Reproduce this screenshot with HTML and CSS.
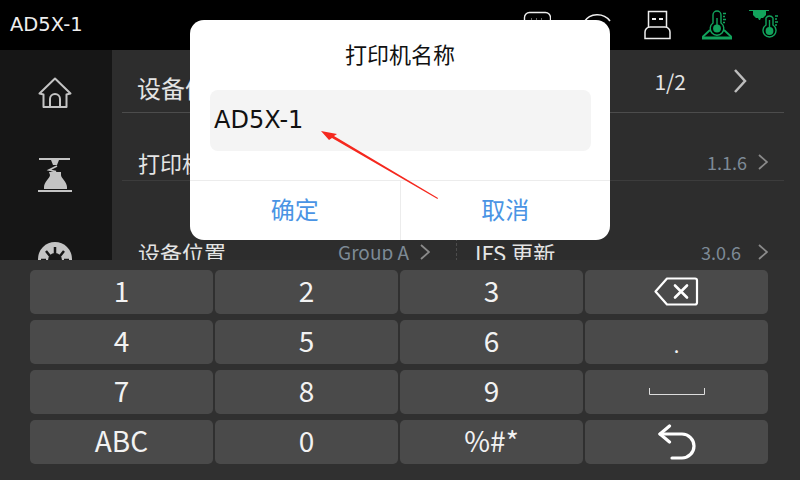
FILE: index.html
```html
<!DOCTYPE html>
<html lang="en">
<head>
    <meta charset="UTF-8" />
    <title>AD5X-1</title>
    <link rel="stylesheet" href="styles.css">
</head>
<body>
    <div class="screen">
        <div class="topbar">
            <span class="device-name">AD5X-1</span>
            <div class="status-icons">
                <svg width="30" height="30" viewBox="0 0 30 30" fill="none" stroke="#eee" stroke-width="1.400"><rect x="3.500" y="2.500" width="26" height="24" rx="5"/><path d="M10 9h1M15 9h1M20 9h1" stroke="#888"/></svg>
                <svg width="30" height="30" viewBox="0 0 30 30" fill="none" stroke="#eee" stroke-width="1.600"><path d="M3 12a16 16 0 0 1 26 -1"/></svg>
                <svg width="30" height="30" viewBox="0 0 30 30" fill="none" stroke="#eee" stroke-width="1.500"><path d="M7.500 17V1.500h18V17"/><path d="M4 28.500V22a5 5 0 0 1 5-5h15a5 5 0 0 1 5 5v6.500z"/><path d="M11 9h4M18 9h4" stroke-width="2.200"/></svg>
                <svg width="32" height="30" viewBox="0 0 32 30" fill="none" stroke="#12a35c" stroke-width="1.400"><path d="M12 13V5a4 4 0 0 1 8 0v8a6.800 6.800 0 1 1-8 0z"/><circle cx="16" cy="18.500" r="3.200" fill="#12a35c"/><path d="M16 8v9M22 3.500h3M22 6.500h2M22 9.500h3M22 12.500h2"/><path d="M9 20l-7.500 7M23 20l7.500 7" stroke-width="1.800"/><path d="M1 28h30" stroke-width="3"/></svg>
                <svg width="32" height="30" viewBox="0 0 32 30" fill="none" stroke="#12a35c" stroke-width="1.400"><path d="M1 0h20v1H1z" stroke="none" fill="#12a35c"/><path d="M5 1h13v4l-3 3h-2l-1 2h-1l-1-2H8L5 5z" fill="#12a35c" stroke="none"/><path d="M18 15V8a4 4 0 0 1 7 0v7a6.500 6.500 0 1 1-7 0z"/><circle cx="21.500" cy="21" r="3.200" fill="#12a35c"/><path d="M21.500 10v10M27 6h3M27 9h2M27 12h3M27 15h2"/></svg>
            </div>
        </div>

        <div class="main">
            <div class="sidebar">
                <svg width="34" height="31" viewBox="0 0 34 31" fill="none" stroke="#c4c4c4" stroke-width="2"><path d="M17 1.500L1.500 16.500l4 1v12.500h23V17.500l4-1z" stroke-linejoin="round"/><path d="M12 30V22a5 5 0 0 1 10 0v8"/></svg>
                <svg width="34" height="34" viewBox="0 0 34 34" fill="#c4c4c4"><path d="M1 0h31v2H1zM13 2h8l-2 5h-4z"/><path d="M19 8l-8 4 7 1.500-6 1.500" fill="none" stroke="#c4c4c4" stroke-width="1.600"/><path d="M11 14h12v3c0 3 6 7 6 12v2H6v-2c0-5 6-9 6-12z"/><path d="M0 32h34v2H0z"/></svg>
                <svg width="34" height="34" viewBox="0 0 34 34"><circle cx="17" cy="17" r="17" fill="#c4c4c4"/><circle cx="17" cy="18" r="7" fill="#161616"/><path d="M17 5v7M8 9l4 5M26 9l-4 5M3 18h5M31 18h-5" stroke="#161616" stroke-width="2.500"/></svg>
            </div>
            <div class="content">
                <div class="content-head">
                    <span class="head-title">设备信息</span>
                    <span class="pager">1/2</span>
                    <svg class="pager-arrow" width="14" height="26" viewBox="0 0 14 26" fill="none" stroke="#bdbdbd" stroke-width="2.500"><path d="M2 2l10 11L2 24"/></svg>
                </div>
                <div class="row row-first">
                    <span class="row-label">打印机名称</span>
                    <span class="value">1.1.6</span>
                    <svg width="10" height="16" viewBox="0 0 10 16" fill="none" stroke="#8a8a8a" stroke-width="1.800"><path d="M1 1l8 7-8 7"/></svg>
                </div>
                <div class="row row-second">
                    <div class="cell cell-split">
                        <span class="row-label">设备位置</span>
                        <span class="value value-group">Group A</span>
                        <svg width="10" height="16" viewBox="0 0 10 16" fill="none" stroke="#8a8a8a" stroke-width="1.800"><path d="M1 1l8 7-8 7"/></svg>
                    </div>
                    <div class="cell cell-right">
                        <span class="row-label">IFS 更新</span>
                        <span class="value value-far">3.0.6</span>
                        <svg width="10" height="16" viewBox="0 0 10 16" fill="none" stroke="#8a8a8a" stroke-width="1.800"><path d="M1 1l8 7-8 7"/></svg>
                    </div>
                </div>
            </div>
        </div>

        <div class="keyboard">
            <div class="key key-text">1</div>
            <div class="key key-text">2</div>
            <div class="key key-text">3</div>
            <div class="key"><svg width="46" height="30" viewBox="0 0 46 30" fill="none" stroke="#fff" stroke-width="2.200" stroke-linejoin="round"><path d="M13 1.500h28a2 2 0 0 1 2 2v22a2 2 0 0 1-2 2H13L1.500 14.500z"/><path d="M21 8.500l12 12M33 8.500l-12 12" stroke-linecap="round" stroke-width="2.600"/></svg></div>
            <div class="key key-text">4</div>
            <div class="key key-text">5</div>
            <div class="key key-text">6</div>
            <div class="key key-dot">.</div>
            <div class="key key-text">7</div>
            <div class="key key-text">8</div>
            <div class="key key-text">9</div>
            <div class="key"><svg width="58" height="8" viewBox="0 0 58 8" fill="none" stroke="#ddd"><path d="M1.500 0v6.500h55V0"/></svg></div>
            <div class="key key-text">ABC</div>
            <div class="key key-text">0</div>
            <div class="key key-text">%#*</div>
            <div class="key"><svg width="38" height="36" viewBox="0 0 38 36" fill="none" stroke="#fff" stroke-width="3.200" stroke-linecap="round" stroke-linejoin="round"><path d="M11.500 2L2 10l9.500 8"/><path d="M2 10h22a12 12 0 0 1 0 24H14"/></svg></div>
        </div>

        <div class="dialog">
            <div class="dialog-title">打印机名称</div>
            <div class="dialog-input">AD5X-1</div>
            <div class="dialog-actions">
                <div class="dialog-btn">确定</div>
                <div class="dialog-btn">取消</div>
            </div>
        </div>

        <svg class="note-arrow" width="120" height="70" viewBox="0 0 120 70"><path d="M1 1l16 3-3 2 104 62-.5 1L12 8l-3 2z" fill="#f5281e"/></svg>
    </div>
</body>
</html>
```

FILE: styles.css
```css
* {
    box-sizing: border-box;
}
body {
    margin: 0;
    font-family: "Noto Sans CJK SC", sans-serif;
    background: #000;
}
svg {
    display: block;
    flex: none;
}
.screen {
    position: relative;
    width: 800px;
    height: 480px;
    overflow: hidden;
    display: flex;
    flex-direction: column;
}
.topbar {
    height: 50px;
    flex: none;
    background: #000;
    color: #eee;
    display: flex;
    align-items: center;
    justify-content: space-between;
    padding: 0 20px 0 10px;
}
.device-name {
    font-family: "DejaVu Sans", sans-serif;
    font-size: 19.500px;
    margin-bottom: 2px;
}
.status-icons {
    display: flex;
    align-items: center;
    gap: 30px;
}
.status-icons svg:last-child {
    margin-left: -15px;
}
.main {
    height: 210px;
    flex: none;
    display: flex;
    overflow: hidden;
}
.sidebar {
    width: 112px;
    flex: none;
    height: 260px;
    background: #161616;
    display: flex;
    flex-direction: column;
    align-items: center;
    padding: 27px 2px 0 0;
    gap: 50px;
}
.content {
    flex: 1;
    min-width: 0;
    background: #2d2d2d;
    color: #e4e4e4;
    padding: 0 16px 0 10px;
}
.content-head {
    height: 63px;
    display: flex;
    align-items: center;
    padding-left: 15px;
    border-bottom: 1px solid #4c4c4c;
}
.head-title {
    flex: 1;
    font-size: 24px;
    padding-top: 12px;
}
.pager {
    font-size: 21px;
    margin-right: 47px;
}
.pager-arrow {
    margin-right: 37px;
}
.row {
    display: flex;
    padding-left: 16px;
    font-size: 22px;
    line-height: 28px;
}
.row-first {
    height: 68px;
    align-items: center;
    padding: 30px 16px 0 16px;
    gap: 11px;
    border-bottom: 1px solid #3c3c3c;
}
.row-second {
    height: 90px;
    padding-top: 57px;
}
.row-label {
    flex: 1;
}
.cell {
    display: flex;
    align-items: center;
    gap: 11px;
    height: 28px;
}
.cell-split {
    width: 319px;
    flex: none;
    padding-right: 26px;
    border-right: 1px dashed #4c4c4c;
}
.cell-right {
    flex: 1;
    padding: 0 16px 0 18px;
}
.value {
    color: #7d8a96;
    font-size: 18px;
}
.value-group {
    font-size: 19px;
}
.value-far {
    margin-right: 6px;
}
.keyboard {
    height: 220px;
    flex: none;
    background: #303030;
    display: grid;
    grid-template-columns: repeat(4, 183px);
    grid-auto-rows: 44px;
    column-gap: 2px;
    row-gap: 6px;
    padding: 10px 0 0 30px;
}
.key {
    background: #4a4a4a;
    border-radius: 5px;
    color: #f2f2f2;
    font-size: 28px;
    display: flex;
    align-items: center;
    justify-content: center;
}
.key-text {
    padding-bottom: 5px;
}
.key-dot {
    font-size: 20px;
    padding-top: 4px;
}
.dialog {
    position: absolute;
    left: 190px;
    top: 20px;
    width: 420px;
    height: 220px;
    background: #fff;
    border-radius: 14px;
    display: flex;
    flex-direction: column;
}
.dialog-title {
    height: 70px;
    color: #111;
    font-size: 22px;
    text-align: center;
    line-height: 66px;
}
.dialog-input {
    height: 61px;
    margin: 0 19px 0 20px;
    padding-left: 4px;
    background: #f4f4f4;
    border-radius: 8px;
    color: #111;
    font-family: "DejaVu Sans", sans-serif;
    font-size: 24px;
    line-height: 60px;
}
.dialog-actions {
    margin-top: 29px;
    flex: 1;
    display: flex;
    border-top: 1px solid #ececec;
}
.dialog-btn {
    flex: 1;
    color: #4a94e4;
    font-size: 24px;
    text-align: center;
    line-height: 55px;
}
.dialog-btn + .dialog-btn {
    border-left: 1px solid #ececec;
}
.note-arrow {
    position: absolute;
    left: 320px;
    top: 130px;
}
```
